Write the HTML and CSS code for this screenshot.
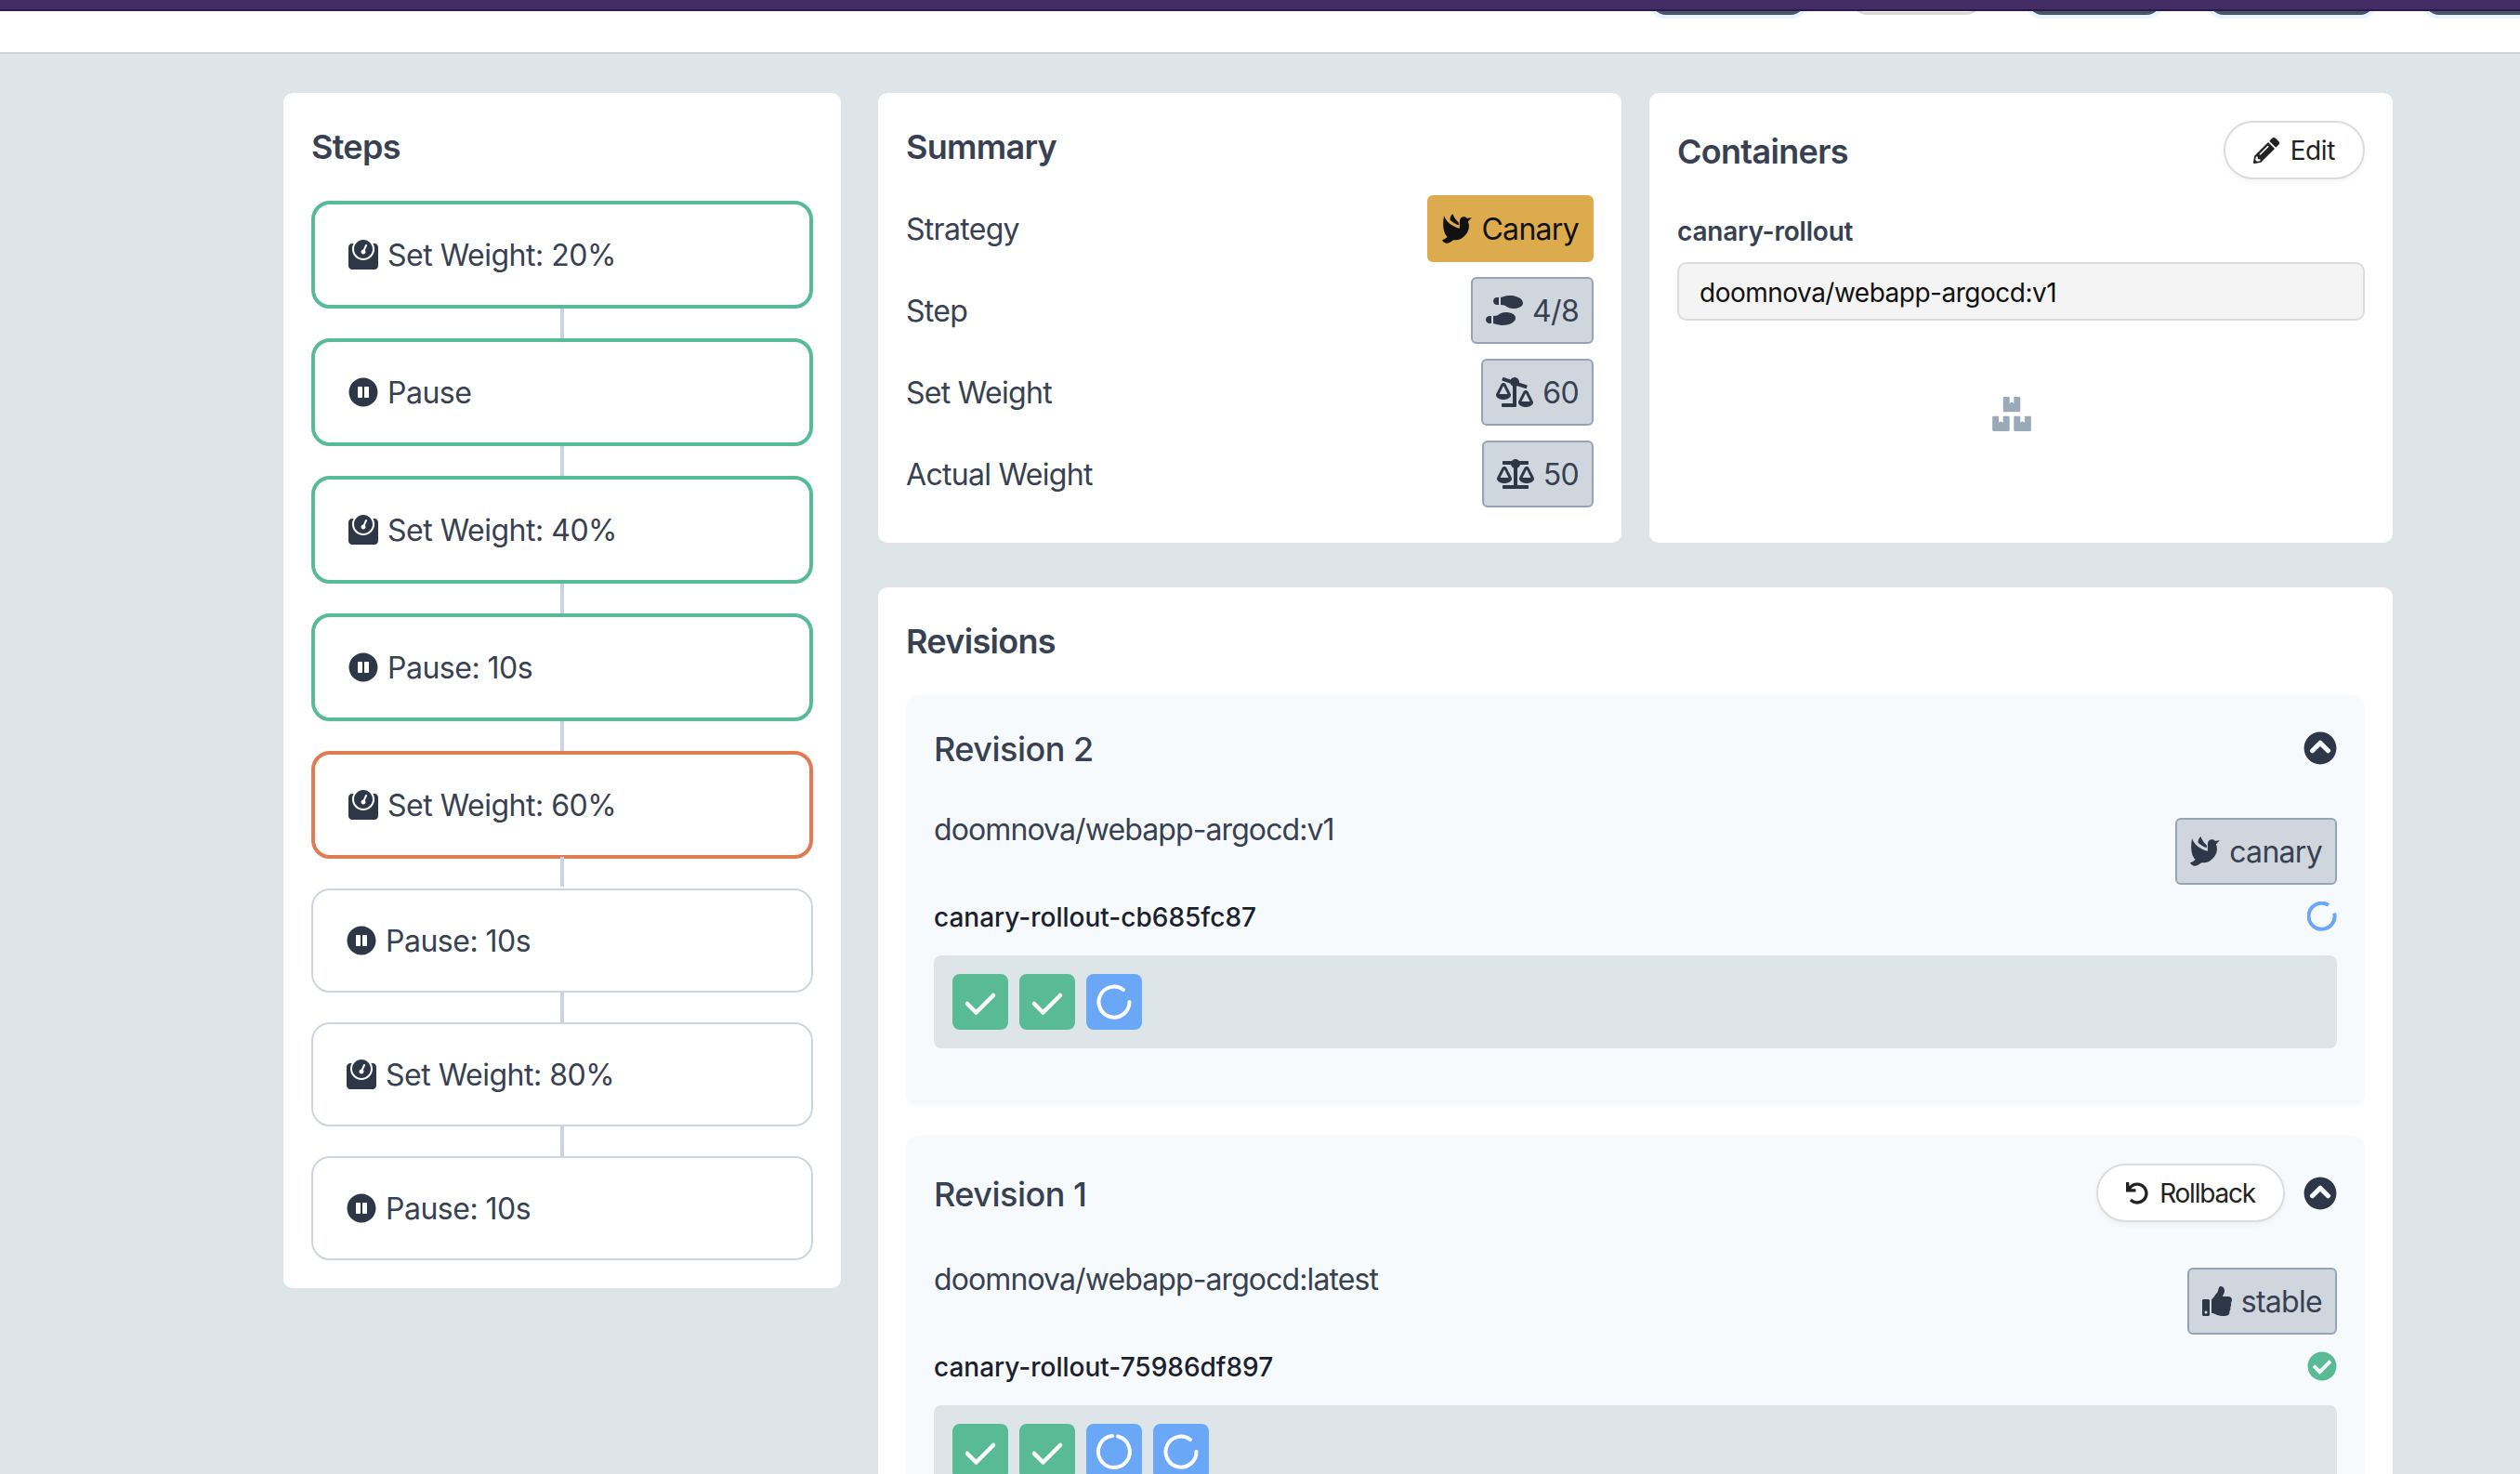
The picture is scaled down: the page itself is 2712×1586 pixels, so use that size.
FILE: index.html
```html
<!DOCTYPE html>
<html lang="en">
<head>
    <meta charset="UTF-8">
    <meta name="viewport" content="width=device-width, initial-scale=1.0">
    <title>Rollout</title>
    <link rel="stylesheet" href="styles.css">
</head>
<body>
    <svg class="icon-defs" aria-hidden="true">
        <symbol id="i-weight" viewBox="0 0 512 512"><path d="M448 64h-25.98C438.44 92.28 448 125.01 448 160c0 105.87-86.13 192-192 192S64 265.87 64 160c0-34.99 9.56-67.72 25.98-96H64C28.71 64 0 92.71 0 128v320c0 35.29 28.71 64 64 64h384c35.29 0 64-28.71 64-64V128c0-35.29-28.71-64-64-64zM256 320c88.37 0 160-71.63 160-160S344.37 0 256 0 96 71.63 96 160s71.63 160 160 160zm-.3-151.94l33.58-78.36c3.5-8.17 12.94-11.92 21.03-8.41 8.12 3.48 11.88 12.89 8.41 21l-33.67 78.55C291.73 188 296 197.45 296 208c0 22.09-17.91 40-40 40s-40-17.91-40-40c0-21.98 17.76-39.77 39.7-39.94z"/></symbol>
        <symbol id="i-pause" viewBox="0 0 512 512"><path d="M256 8C119 8 8 119 8 256s111 248 248 248 248-111 248-248S393 8 256 8zm-16 328c0 8.8-7.2 16-16 16h-48c-8.8 0-16-7.2-16-16V176c0-8.8 7.2-16 16-16h48c8.8 0 16 7.2 16 16v160zm112 0c0 8.8-7.2 16-16 16h-48c-8.8 0-16-7.2-16-16V176c0-8.8 7.2-16 16-16h48c8.8 0 16 7.2 16 16v160z"/></symbol>
        <symbol id="i-dove" viewBox="0 0 512 512"><path d="M32 30C60 130 180 225 302 250V130C302 85 335 53 375 53C400 53 420 62 430 78L510 64L445 135C480 200 470 340 330 426C290 450 240 455 196 453C150 490 100 515 64 506C35 500 15 480 0 453C30 445 65 425 90 400C30 340 0 220 32 30Z"/><path d="M180 0C140 40 130 90 140 112C190 155 240 182 285 195V150C240 110 205 60 180 0Z"/></symbol>
        <symbol id="i-steps" viewBox="0 0 640 512"><path d="M192 160h32V32h-32c-35.35 0-64 28.65-64 64s28.65 64 64 64zM0 416c0 35.35 28.65 64 64 64h32V352H64c-35.35 0-64 28.65-64 64zm337.46-128c-34.91 0-76.16 13.12-104.73 32-24.79 16.38-44.52 32-104.73 32v128l57.53 15.97c26.21 7.28 53.01 13.12 80.31 15.05 32.69 2.31 65.6.67 97.58-6.2C472.9 481.3 512 429.22 512 384c0-64-84.18-96-174.54-96zM491.42 7.19C459.44.32 426.53-1.33 393.84.99c-27.3 1.93-54.1 7.77-80.31 15.04L256 32v128c60.2 0 79.94 15.62 104.73 32 28.57 18.88 69.82 32 104.73 32C555.82 224 640 192 640 128c0-45.22-39.1-97.3-148.58-120.81z"/></symbol>
        <symbol id="i-scale" viewBox="0 0 640 512"><path d="M256 336h-.02c0-16.18 1.34-8.73-85.05-181.51-17.65-35.29-68.19-35.36-85.87 0C-2.06 328.75.02 320.33.02 336H0c0 44.18 57.31 80 128 80s128-35.82 128-80zM128 176l72 144H56l72-144zm511.98 160c0-16.18 1.34-8.73-85.05-181.51-17.65-35.29-68.19-35.36-85.87 0-87.12 174.26-85.04 165.84-85.04 181.51H384c0 44.18 57.31 80 128 80s128-35.82 128-80h-.02zM440 320l72-144 72 144H440zm88 128H352V153.25c23.51-10.29 41.16-31.48 46.39-57.25H528c8.84 0 16-7.16 16-16V48c0-8.84-7.16-16-16-16H383.64C369.04 12.68 346.09 0 320 0s-49.04 12.68-63.64 32H112c-8.84 0-16 7.16-16 16v32c0 8.84 7.16 16 16 16h129.61c5.23 25.76 22.87 46.96 46.39 57.25V448H112c-8.84 0-16 7.16-16 16v32c0 8.84 7.16 16 16 16h416c8.84 0 16-7.16 16-16v-32c0-8.84-7.16-16-16-16z"/></symbol>
        <symbol id="i-scale-right" viewBox="0 0 640 512"><path transform="translate(640 0) scale(-1 1)" d="M528 448H352V153.25c20.42-8.94 36.1-26.22 43.38-47.47l132-44.26c8.38-2.81 12.89-11.88 10.08-20.26l-10.17-30.34C524.48 2.54 515.41-1.97 507.03.84L389.11 40.37C375.3 16.36 349.69 0 320 0c-44.18 0-80 35.82-80 80 0 3.43.59 6.71 1.01 10.03l-128.39 43.05c-8.38 2.81-12.89 11.88-10.08 20.26l10.17 30.34c2.81 8.38 11.88 12.89 20.26 10.08l142.05-47.63c4.07 2.77 8.43 5.12 12.99 7.12V496c0 8.84 7.16 16 16 16h224c8.84 0 16-7.16 16-16v-32c-.01-8.84-7.17-16-16.01-16zm111.98-144c0-16.18 1.34-8.73-85.05-181.51-17.65-35.29-68.19-35.36-85.87 0-87.12 174.26-85.04 165.84-85.04 181.51H384c0 44.18 57.31 80 128 80s128-35.82 128-80h-.02zM440 288l72-144 72 144H440zm-269.07-37.51c-17.65-35.29-68.19-35.36-85.87 0C-2.06 424.75.02 416.33.02 432H0c0 44.18 57.31 80 128 80s128-35.82 128-80h-.02c0-16.18 1.34-8.73-85.05-181.51zM56 416l72-144 72 144H56z"/></symbol>
        <symbol id="i-pencil" viewBox="0 0 512 512"><path d="M497.9 142.1l-46.1 46.1c-4.7 4.7-12.3 4.7-17 0l-111-111c-4.7-4.7-4.7-12.3 0-17l46.1-46.1c18.7-18.7 49.1-18.7 67.9 0l60.1 60.1c18.8 18.7 18.8 49.1 0 67.9zM284.2 99.8L21.6 362.4.4 483.9c-2.9 16.4 11.4 30.6 27.8 27.8l121.5-21.3 262.6-262.6c4.7-4.7 4.7-12.3 0-17l-111-111c-4.8-4.7-12.4-4.7-17.1 0zM124.1 339.9c-5.5-5.5-5.5-14.3 0-19.8l154-154c5.5-5.5 14.3-5.5 19.8 0s5.5 14.3 0 19.8l-154 154c-5.5 5.5-14.3 5.5-19.8 0zM88 424h48v36.3l-64.5 11.3-31.1-31.1L51.7 376H88v48z"/></symbol>
        <symbol id="i-boxes" viewBox="0 0 576 512"><path d="M560 288h-80v96l-32-21.3-32 21.3v-96h-80c-8.8 0-16 7.2-16 16v192c0 8.8 7.2 16 16 16h224c8.8 0 16-7.2 16-16V304c0-8.8-7.2-16-16-16zm-384-64h224c8.8 0 16-7.2 16-16V16c0-8.8-7.2-16-16-16h-80v96l-32-21.3L256 96V0h-80c-8.8 0-16 7.2-16 16v192c0 8.8 7.2 16 16 16zm64 64h-80v96l-32-21.3L96 384v-96H16c-8.8 0-16 7.2-16 16v192c0 8.8 7.2 16 16 16h224c8.8 0 16-7.2 16-16V304c0-8.8-7.2-16-16-16z"/></symbol>
        <symbol id="i-chevron" viewBox="0 0 512 512"><path d="M8 256C8 119 119 8 256 8s248 111 248 248-111 248-248 248S8 393 8 256zm231-113.9L103.5 277.6c-9.4 9.4-9.4 24.6 0 33.9l17 17c9.4 9.4 24.6 9.4 33.9 0L256 226.9l101.6 101.6c9.4 9.4 24.6 9.4 33.9 0l17-17c9.4-9.4 9.4-24.6 0-33.9L273 142.1c-9.4-9.4-24.6-9.4-34 0z"/></symbol>
        <symbol id="i-undo" viewBox="0 0 512 512"><path d="M212.333 224.333H12c-6.627 0-12-5.373-12-12V12C0 5.373 5.373 0 12 0h48c6.627 0 12 5.373 12 12v78.112C117.773 39.279 184.26 7.47 258.175 8.007c136.906.994 246.448 111.623 246.157 248.532C504.041 393.258 393.12 504 256.333 504c-64.089 0-122.496-24.313-166.51-64.215-5.099-4.622-5.334-12.554-.467-17.42l33.967-33.967c4.474-4.474 11.662-4.717 16.401-.525C170.76 415.336 211.58 432 256.333 432c97.268 0 176-78.716 176-176 0-97.267-78.716-176-176-176-58.496 0-110.28 28.476-142.274 72.333h98.274c6.627 0 12 5.373 12 12v48c0 6.627-5.373 12-12 12z"/></symbol>
        <symbol id="i-thumb" viewBox="0 0 512 512"><path d="M104 224H24c-13.255 0-24 10.745-24 24v240c0 13.255 10.745 24 24 24h80c13.255 0 24-10.745 24-24V248c0-13.255-10.745-24-24-24zM64 472c-13.255 0-24-10.745-24-24s10.745-24 24-24 24 10.745 24 24-10.745 24-24 24zM384 81.452c0 42.416-25.97 66.208-33.277 94.548h101.723c33.397 0 59.397 27.746 59.553 58.098.084 17.938-7.546 37.249-19.439 49.197l-.11.11c9.836 23.337 8.237 56.037-9.308 79.469 8.681 25.895-.069 57.704-16.382 74.757 4.298 17.598 2.244 32.575-6.148 44.632C440.202 511.587 389.616 512 346.839 512l-2.845-.001c-48.287-.017-87.806-17.598-119.56-31.725-15.957-7.099-36.821-15.887-52.651-16.178-6.54-.12-11.783-5.457-11.783-11.998v-213.77c0-3.2 1.282-6.271 3.558-8.521 39.614-39.144 56.648-80.587 89.117-113.111 14.804-14.832 20.188-37.236 25.393-58.902C282.515 39.293 291.817 0 312 0c24 0 72 8 72 81.452z"/></symbol>
        <symbol id="i-check-circle" viewBox="0 0 512 512"><path d="M504 256c0 136.967-111.033 248-248 248S8 392.967 8 256 119.033 8 256 8s248 111.033 248 248zM227.314 387.314l184-184c6.248-6.248 6.248-16.379 0-22.627l-22.627-22.627c-6.248-6.249-16.379-6.249-22.628 0L216 308.118l-70.059-70.059c-6.248-6.248-16.379-6.248-22.628 0l-22.627 22.627c-6.248 6.248-6.248 16.379 0 22.627l104 104c6.249 6.249 16.379 6.249 22.628.001z"/></symbol>
        <symbol id="i-tick" viewBox="0 0 60 60"><path d="M16 32l9.500 9.500L44 23" fill="none" stroke="#fff" stroke-width="4.500" stroke-linecap="round" stroke-linejoin="round"/></symbol>
        <symbol id="i-ring-a" viewBox="0 0 60 60"><path d="M34 13.500A17 17 0 1 1 28 13.100" fill="none" stroke="#fff" stroke-width="4" stroke-linecap="round"/></symbol>
        <symbol id="i-ring-b" viewBox="0 0 60 60"><path d="M46.500 30A16.500 16.500 0 1 1 40 17" fill="none" stroke="#fff" stroke-width="4" stroke-linecap="round"/></symbol>
    </svg>

    <div class="top-strip"></div>
    <header class="topbar">
        <span class="nav-btn nav-btn-dark nav-btn-a"></span>
        <span class="nav-btn nav-btn-light nav-btn-b"></span>
        <span class="nav-btn nav-btn-dark nav-btn-c"></span>
        <span class="nav-btn nav-btn-dark nav-btn-d"></span>
        <span class="nav-btn nav-btn-dark nav-btn-e"></span>
    </header>

    <main class="page">
        <section class="card steps-card">
            <h2 class="card-title">Steps</h2>
            <div class="steps">
                <div class="step step-done"><svg class="icon"><use href="#i-weight"/></svg><span>Set Weight: 20%</span></div>
                <div class="step step-done"><svg class="icon"><use href="#i-pause"/></svg><span>Pause</span></div>
                <div class="step step-done"><svg class="icon"><use href="#i-weight"/></svg><span>Set Weight: 40%</span></div>
                <div class="step step-done"><svg class="icon"><use href="#i-pause"/></svg><span>Pause: 10s</span></div>
                <div class="step step-current"><svg class="icon"><use href="#i-weight"/></svg><span>Set Weight: 60%</span></div>
                <div class="step"><svg class="icon"><use href="#i-pause"/></svg><span>Pause: 10s</span></div>
                <div class="step"><svg class="icon"><use href="#i-weight"/></svg><span>Set Weight: 80%</span></div>
                <div class="step"><svg class="icon"><use href="#i-pause"/></svg><span>Pause: 10s</span></div>
            </div>
        </section>

        <div class="main-col">
            <div class="top-row">
                <section class="card summary-card">
                    <h2 class="card-title">Summary</h2>
                    <div class="summary-rows">
                        <div class="summary-row"><span>Strategy</span><span class="badge badge-canary"><svg class="icon"><use href="#i-dove"/></svg>Canary</span></div>
                        <div class="summary-row"><span>Step</span><span class="badge"><svg class="icon icon-wide"><use href="#i-steps"/></svg>4/8</span></div>
                        <div class="summary-row"><span>Set Weight</span><span class="badge"><svg class="icon icon-wide"><use href="#i-scale-right"/></svg>60</span></div>
                        <div class="summary-row"><span>Actual Weight</span><span class="badge"><svg class="icon icon-wide"><use href="#i-scale"/></svg>50</span></div>
                    </div>
                </section>

                <section class="card containers-card">
                    <div class="containers-head">
                        <h2 class="card-title">Containers</h2>
                        <button class="pill-btn"><svg class="icon-sm"><use href="#i-pencil"/></svg>Edit</button>
                    </div>
                    <div class="container-name">canary-rollout</div>
                    <div class="image-input">doomnova/webapp-argocd:v1</div>
                    <div class="boxes-wrap"><svg class="boxes-icon"><use href="#i-boxes"/></svg></div>
                </section>
            </div>

            <section class="card revisions-card">
                <h2 class="card-title">Revisions</h2>

                <div class="revision">
                    <div class="revision-head revision-head-short">
                        <span class="revision-title">Revision 2</span>
                        <svg class="chevron"><use href="#i-chevron"/></svg>
                    </div>
                    <div class="image-row">
                        <span class="image-name">doomnova/webapp-argocd:v1</span>
                        <span class="badge"><svg class="icon"><use href="#i-dove"/></svg>canary</span>
                    </div>
                    <div class="rs-row">
                        <span class="rs-name">canary-rollout-cb685fc87</span>
                        <svg class="status status-spin" viewBox="0 0 32 32"><path d="M29.200 12.500A14 14 0 1 1 23 3.900" fill="none" stroke="currentColor" stroke-width="4"/></svg>
                    </div>
                    <div class="pods">
                        <span class="pod pod-ok"><svg><use href="#i-tick"/></svg></span>
                        <span class="pod pod-ok"><svg><use href="#i-tick"/></svg></span>
                        <span class="pod pod-wait"><svg><use href="#i-ring-b"/></svg></span>
                    </div>
                </div>

                <div class="revision">
                    <div class="revision-head">
                        <span class="revision-title">Revision 1</span>
                        <div class="revision-actions">
                            <button class="pill-btn pill-btn-rollback"><svg class="icon-sm"><use href="#i-undo"/></svg>Rollback</button>
                            <svg class="chevron"><use href="#i-chevron"/></svg>
                        </div>
                    </div>
                    <div class="image-row">
                        <span class="image-name">doomnova/webapp-argocd:latest</span>
                        <span class="badge"><svg class="icon"><use href="#i-thumb"/></svg>stable</span>
                    </div>
                    <div class="rs-row">
                        <span class="rs-name">canary-rollout-75986df897</span>
                        <svg class="status status-ok"><use href="#i-check-circle"/></svg>
                    </div>
                    <div class="pods">
                        <span class="pod pod-ok"><svg><use href="#i-tick"/></svg></span>
                        <span class="pod pod-ok"><svg><use href="#i-tick"/></svg></span>
                        <span class="pod pod-wait"><svg><use href="#i-ring-a"/></svg></span>
                        <span class="pod pod-wait"><svg><use href="#i-ring-b"/></svg></span>
                    </div>
                </div>
            </section>
        </div>
    </main>
</body>
</html>
```

FILE: styles.css
```css
html, body {
    margin: 0;
    padding: 0;
    height: 1586px;
    overflow: hidden;
}

body {
    background-color: #dee5e8;
    color: #374151;
    font-family: Inter, "Noto Sans", sans-serif;
    font-size: 32px;
    letter-spacing: -0.7px;
}

.icon-defs {
    display: none;
}

.top-strip {
    position: absolute;
    top: 0;
    left: 0;
    right: 0;
    z-index: 2;
    height: 10px;
    background-color: #432c66;
    border-bottom: 2px solid #2c1a4d;
}

.topbar {
    display: flex;
    height: 56px;
    background-color: #fff;
    border-bottom: 2px solid #cbd5e0;
    overflow: hidden;
}

.nav-btn {
    display: block;
    box-sizing: border-box;
    height: 16px;
    border-radius: 0 0 28px 28px;
    flex-shrink: 0;
}

.nav-btn-dark {
    background-color: #4a5568;
    box-shadow: 0 0 0 4px #e6f4ff;
}

.nav-btn-light {
    background-color: #fff;
    border-bottom: 3px solid #d8d8d8;
}

.nav-btn-a { width: 166px; margin-left: 1777px; }
.nav-btn-b { width: 139px; margin-left: 50px; }
.nav-btn-c { width: 144px; margin-left: 50px; }
.nav-btn-d { width: 179px; margin-left: 51px; }
.nav-btn-e { width: 120px; margin-left: 53px; }

.page {
    display: flex;
    align-items: flex-start;
    gap: 40px;
    padding: 42px 0 0 305px;
}

.card {
    box-sizing: border-box;
    background-color: #fff;
    border-radius: 10px;
    padding: 30px;
}

.card-title {
    margin: 0;
    font-size: 36px;
    font-weight: 600;
    line-height: 56px;
}

.steps-card {
    width: 600px;
    padding-bottom: 30px;
}

.steps {
    display: flex;
    flex-direction: column;
    gap: 32px;
    margin-top: 30px;
    letter-spacing: -0.5px;
}

.step {
    position: relative;
    box-sizing: border-box;
    display: flex;
    align-items: center;
    gap: 10px;
    height: 112px;
    padding: 0 36px;
    background-color: #fff;
    border: 2px solid #cbd5e0;
    border-radius: 20px;
}

.step + .step::before {
    content: "";
    position: absolute;
    top: -36px;
    left: 50%;
    width: 4px;
    height: 34px;
    margin-left: -2px;
    background-color: #cbd5e0;
}

.step-done {
    height: 116px;
    border: 4px solid #58bb96;
}

.step-current {
    height: 116px;
    border: 4px solid #e07b53;
}

.step-done + .step::before,
.step-current + .step::before {
    top: -36px;
    height: 32px;
}

.icon {
    width: 32px;
    height: 32px;
    flex-shrink: 0;
    fill: #2d3748;
}

.icon-wide {
    width: 40px;
}

.main-col {
    display: flex;
    flex-direction: column;
    gap: 48px;
    width: 1630px;
}

.top-row {
    display: flex;
    gap: 30px;
}

.summary-card,
.containers-card {
    width: 800px;
    height: 484px;
}

.summary-rows {
    display: flex;
    flex-direction: column;
    gap: 16px;
    margin-top: 24px;
}

.summary-row {
    display: flex;
    justify-content: space-between;
    align-items: center;
}

.badge {
    box-sizing: border-box;
    display: inline-flex;
    align-items: center;
    gap: 10px;
    height: 72px;
    padding: 0 14px;
    background-color: #cfd6de;
    border: 2px solid #94a4b4;
    border-radius: 6px;
}

.badge-canary {
    background-color: #dcab4e;
    border-color: #dcab4e;
    color: #111;
}

.badge-canary .icon {
    fill: #111;
}

.containers-head {
    display: flex;
    justify-content: space-between;
    align-items: center;
}

.containers-head .card-title {
    margin-top: 3px;
}

.pill-btn {
    box-sizing: border-box;
    display: inline-flex;
    align-items: center;
    gap: 12px;
    height: 63px;
    padding: 0 30px;
    background-color: #fff;
    color: #222;
    border: 2px solid #dcdcdc;
    border-radius: 32px;
    box-shadow: 0 3px 6px rgba(0, 0, 0, 0.04);
    font-family: inherit;
    font-size: 28px;
    letter-spacing: -0.4px;
}

.icon-sm {
    width: 28px;
    height: 28px;
    flex-shrink: 0;
    fill: currentColor;
}

.pill-btn-rollback {
    letter-spacing: -1.2px;
}

.pill-btn-rollback .icon-sm {
    width: 24px;
    height: 24px;
}

.container-name {
    margin-top: 36px;
    font-size: 28px;
    font-weight: 600;
    letter-spacing: -0.2px;
    line-height: 40px;
}

.image-input {
    box-sizing: border-box;
    height: 63px;
    margin-top: 13px;
    padding: 0 22px;
    background-color: #f4f4f4;
    border: 2px solid #dcdcdc;
    border-radius: 10px;
    color: #111;
    font-size: 28px;
    letter-spacing: -0.5px;
    line-height: 62px;
}

.boxes-wrap {
    display: flex;
    justify-content: center;
    padding: 82px 20px 0 0;
}

.boxes-icon {
    width: 42px;
    height: 37px;
    fill: #9aa9b8;
}

.revisions-card {
    width: 1630px;
    height: 954px;
    overflow: hidden;
    border-radius: 10px 10px 0 0;
}

.revision {
    margin-top: 32px;
    padding: 30px 30px 62px;
    background-color: #f7fafc;
    border-radius: 12px;
}

.revisions-card .card-title + .revision {
    margin-top: 30px;
}

.revision-head {
    display: flex;
    justify-content: space-between;
    align-items: center;
    height: 63px;
}

.revision-head-short {
    height: 53px;
}

.revision-title {
    font-size: 36px;
    font-weight: 500;
    padding-top: 2px;
    letter-spacing: -0.5px;
}

.revision-actions {
    display: flex;
    align-items: center;
    gap: 20px;
}

.chevron {
    width: 36px;
    height: 36px;
    fill: #2d3748;
}

.image-row {
    display: flex;
    justify-content: space-between;
    align-items: flex-start;
    margin-top: 49px;
}

.image-name {
    line-height: 26px;
    letter-spacing: -0.9px;
}

.rs-row {
    display: flex;
    justify-content: space-between;
    align-items: center;
    height: 32px;
    margin-top: 18px;
}

.rs-name {
    padding-top: 2px;
    color: #1a202c;
    font-size: 28px;
    font-weight: 500;
    letter-spacing: 0;
}

.status {
    width: 32px;
    height: 32px;
}

.status-spin {
    color: #6ba7f7;
}

.status-ok {
    fill: #58bb96;
}

.pods {
    display: flex;
    gap: 12px;
    margin-top: 26px;
    padding: 20px;
    background-color: #dee5e8;
    border-radius: 8px;
}

.pod {
    display: block;
    width: 60px;
    height: 60px;
    border-radius: 8px;
}

.pod svg {
    display: block;
    width: 60px;
    height: 60px;
}

.pod-ok {
    background-color: #58bb96;
}

.pod-wait {
    background-color: #6ba7f7;
}
```
